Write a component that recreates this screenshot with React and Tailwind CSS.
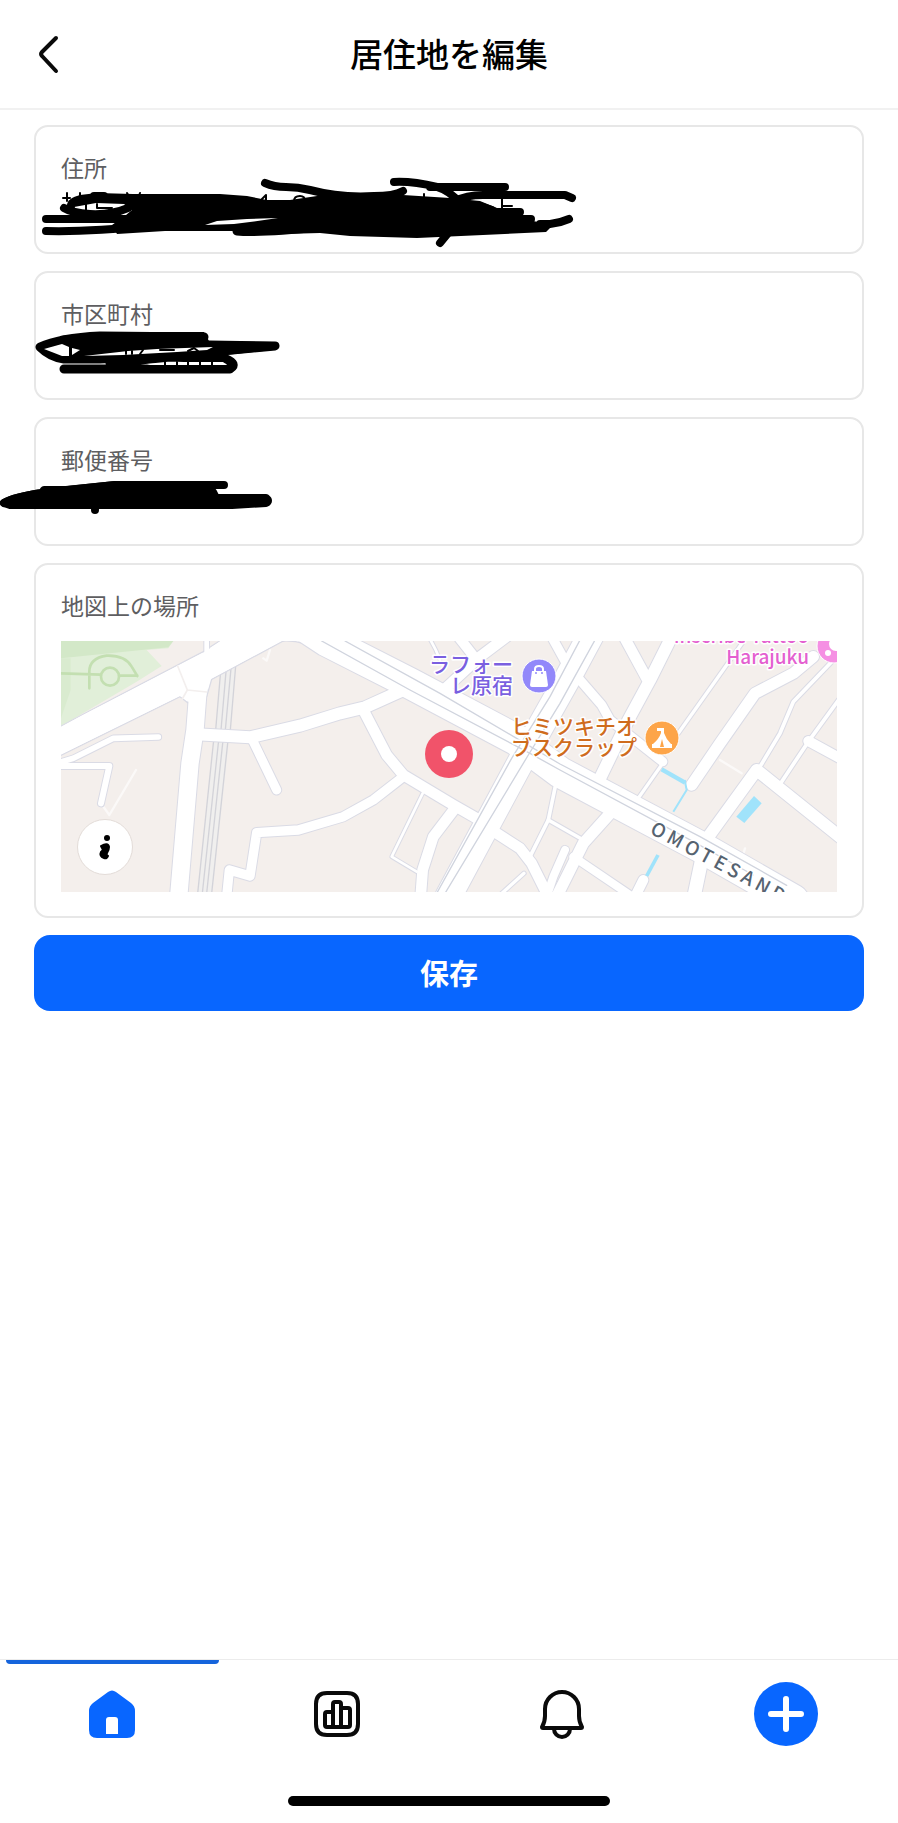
import React, { useState } from 'react';

const ROAD_EDGE = '#dadbe5';

// [path, width] in map tile units
const ROADS = [
    ['M20 400 L70 385 L190 325 L325 321', 17],
    ['M20 408 H178 L153 520', 18],
    ['M470 20 V80', 14],
    ['M445 170 L435 300 L420 400 L386 800', 52],
    ['M440 313 L600 322 L750 287 L870 250 L945 232 L1060 180', 36],
    ['M605 325 L680 480', 27],
    ['M530 800 L538 720 L600 738 L620 608 L745 600 L880 560 L970 510 L1060 440', 28],
    ['M940 240 L1010 375 L1060 435 L1210 525 L1280 565', 32],
    ['M1215 535 L1150 620 L1118 720 L1112 800', 32],
    ['M1118 490 L1025 680 L1100 725', 8],
    ['M1170 190 L1290 80 L1370 20', 32],
    ['M1225 20 L1280 90', 30],
    ['M1135 20 Q1155 50 1170 90', 8],
    ['M1505 20 L1560 120', 28],
    ['M1310 590 L1410 655 L1445 700 L1495 800', 32],
    ['M1545 660 L1510 740 L1490 800', 24],
    ['M1522 440 L1495 570 L1440 680', 11],
    ['M1495 570 L1600 630', 11],
    ['M1422 730 L1350 795', 10],
    ['M1685 545 L1600 640 L1550 740 L1520 800', 34],
    ['M1570 680 L1740 795', 24],
    ['M1780 750 L1755 800', 30],
    ['M1955 690 L1932 800', 40],
    ['M1590 150 L1655 225 L1680 270 L1838 395', 28],
    ['M1865 20 L1800 150 L1735 270 L1650 445', 36],
    ['M1722 20 L1790 145', 32],
    ['M1838 400 L1768 500', 10],
    ['M2090 20 L1885 310', 10],
    ['M2290 80 L2230 130 L2115 190 L2010 340 L1925 465', 34],
    ['M2350 90 L2230 215 L2190 310 L2130 410', 11],
    ['M2400 645 L2120 420 L1975 620', 36],
    ['M2380 190 L2275 335 L2195 455', 11],
    ['M2275 333 L2380 390', 30],
    ['M1195 800 L1415 390 L1550 150 L1625 10', 78],
    ['M780 0 L830 33 L1080 160 L1400 330 L1530 427 L1950 650 L2230 810', 92],
];

const RAILS = [
    'M511 135 L497 300 L490 340 L443 790',
    'M528 125 L513 300 L505 340 L457 790',
    'M543 115 L526 300 L518 340 L470 790',
    'M557 108 L541 300 L533 340 L485 790',
];

const LANES = [
    'M815 33 L1080 180 L1440 370 L1530 420 L1930 635 L2110 735',
    'M885 33 L1170 190 L1400 325 L1530 402 L1950 620 L2210 766',
    'M1160 790 L1385 385 L1500 200 L1590 30',
    'M1185 790 L1435 375 L1530 220 L1635 30',
];

const Roads = () => (
    <g transform="translate(-11 -11) scale(0.33333)" fill="none" strokeLinejoin="round" strokeLinecap="round">
        {/* Park */}
        <path d="M33 33 H370 L355 55 L290 60 L335 108 L260 155 L95 252 L33 290 Z" fill="#e1efd9" />
        <path d="M33 33 H370 L355 52 L33 85 Z" fill="#d3e8c8" />
        <path d="M33 85 H62 V180 L33 265 Z" fill="#d9ebcf" />
        <g stroke="#c3dfb1" strokeWidth="8">
            <circle cx="180" cy="140" r="27" />
            <path d="M33 130 L152 134 M208 137 H262 M118 175 V130 Q115 85 170 77 Q225 75 245 110 L262 138" />
        </g>

        {/* Railway */}
        <path d="M534 115 L519 300 L464 790" stroke="#f0efee" strokeWidth="44" />
        {RAILS.map((d) => <path key={d} d={d} stroke="#d3d3d9" strokeWidth="4" />)}

        {/* Faint footpaths */}
        <path d="M160 530 L178 555 L258 420 M640 85 L650 92 L660 60 M2010 390 L2075 430 M2085 655 L2075 690" stroke="#fbf9f8" strokeWidth="7" />

        {/* Street casing, then street surface */}
        <path d="M20 296 L95 255 L460 65 L485 48 L530 20 H720 L700 33 L485 148 L470 200 L415 220 L390 200 L20 382 Z" fill="#ffffff" stroke={ROAD_EDGE} strokeWidth="4" />
        <path d="M700 33 Q760 30 830 70 L1040 180 L1100 150 L850 20 H700 Z" fill="#ffffff" stroke={ROAD_EDGE} strokeWidth="4" />
        {ROADS.map(([d, w]) => <path key={d} d={d} stroke={ROAD_EDGE} strokeWidth={w + 6} />)}
        <path d="M20 297 L95 257 L462 67 L487 50 L530 20 H716 L698 31 L481 148 L468 200 L417 216 L390 198 L20 380 Z" fill="#ffffff" />
        <path d="M702 30 Q760 28 832 67 L1040 176 L1100 150 L850 20 H700 Z" fill="#ffffff" />
        {ROADS.map(([d, w]) => <path key={d} d={d} stroke="#ffffff" strokeWidth={w} />)}
        <path d="M383 108 L412 180 L470 186 M412 180 L395 210" stroke="#f3efee" strokeWidth="5" />
        {LANES.map((d) => <path key={d} d={d} stroke="#d0d4de" strokeWidth="4" />)}

        {/* Water */}
        <g stroke="#a0e3fb" strokeLinecap="butt">
            <path d="M1835 418 L1905 458" strokeWidth="13" />
            <path d="M1904 450 L1910 480 L1870 545" strokeWidth="6" />
            <path d="M1824 675 L1790 738" strokeWidth="11" />
        </g>
        <path d="M2112 498 L2135 520 L2083 579 L2059 560 Z" fill="#a0e3fb" />
    </g>
);

const LocationMap = () => (
    <div className="relative h-[251px] overflow-hidden bg-[#f4efec]">
        <svg
            viewBox="0 0 776 251"
            preserveAspectRatio="xMidYMid slice"
            className="block h-full w-full"
            role="img"
            aria-label="地図"
        >
            <Roads />

            {/* Shopping */}
            <circle cx="478" cy="35" r="17" fill="#9288fa" stroke="#ffffff" strokeWidth="1" />
            <path d="M471 30 H485 L487 44 Q487 46 485 46 H471 Q469 46 469 44 Z" fill="#ffffff" />
            <path d="M474 31 V28 Q474 25 478 25 Q482 25 482 28 V31" fill="none" stroke="#ffffff" strokeWidth="2" />
            <circle cx="475" cy="32" r="1" fill="#9288fa" />
            <circle cx="481" cy="32" r="1" fill="#9288fa" />

            {/* Camp */}
            <circle cx="601" cy="97" r="17" fill="#fda549" stroke="#ffffff" strokeWidth="1" />
            <path d="M592 103 Q598 98 600 92 V90 H596 V87 H603 V92 Q605 98 610 103 H611 V107 H591 V103 Z" fill="#ffffff" />
            <path d="M601 98 L603 106 H599 Z" fill="#fda549" />

            {/* Tattoo studio */}
            <circle cx="773" cy="5" r="17" fill="#f590e3" stroke="#ffffff" strokeWidth="1" />
            <circle cx="775" cy="3" r="7" fill="#ffffff" />
            <circle cx="767" cy="12" r="3" fill="#ffffff" />

            <g
                className="[font-family:'Noto_Sans_CJK_JP',sans-serif] text-[21px] font-medium [paint-order:stroke]"
                stroke="#ffffff"
                strokeWidth="3"
                strokeLinejoin="round"
                textAnchor="end"
            >
                <text x="452" y="31" fill="#7a5fe0">ラフォー</text>
                <text x="452" y="52" fill="#7a5fe0">レ原宿</text>
                <text x="576" y="93" fill="#cf6c1d">ヒミツキチオ</text>
                <text x="576" y="114" fill="#cf6c1d">ブスクラップ</text>
            </g>
            <g
                className="[font-family:'Noto_Sans_CJK_JP',sans-serif] text-[19px] font-medium [paint-order:stroke]"
                stroke="#ffffff"
                strokeWidth="3"
                strokeLinejoin="round"
                textAnchor="end"
                fill="#e45fd0"
            >
                <text x="748" y="2">Inscribe Tattoo</text>
                <text x="748" y="23">Harajuku</text>
            </g>
            <text
                transform="translate(588 192) rotate(28)"
                className="[font-family:'Noto_Sans_CJK_JP',sans-serif] text-[19px] font-medium tracking-[4px] [paint-order:stroke]"
                fill="#566370"
                stroke="#ffffff"
                strokeWidth="3"
            >
                OMOTESANDO
            </text>

            {/* Selected place */}
            <circle cx="388" cy="113" r="24" fill="#f1536a" />
            <circle cx="388" cy="113" r="8" fill="#ffffff" />
        </svg>

        <button
            type="button"
            aria-label="地図の情報"
            className="absolute bottom-[17px] left-4 flex size-14 items-center justify-center rounded-full border border-[#e3dcd8] bg-white"
        >
            <svg viewBox="0 0 14 26" className="h-[26px] w-[14px]">
                <circle cx="9" cy="4" r="3" fill="#000000" />
                <path d="M3 12 Q10 8 11 13 Q11 16 9 19 Q8 21 10 22 Q9 25 6 24 Q1 22 3 18 Q6 15 4 14 Z" fill="#000000" stroke="#000000" strokeWidth="2" strokeLinejoin="round" />
            </svg>
        </button>
    </div>
);

/* Pen marks hiding the private values. Drawn from the page edge, y from the card top. */
const AddressMarks = () => (
    <g fill="none" stroke="#000000" strokeWidth="8" strokeLinecap="round" strokeLinejoin="round">
        <path d="M63 73 H70 M67 68 V76 M80 68 V76 M127 68 L130 73 M140 68 L138 73 M262 74 L266 70 V76 M294 76 Q294 71 300 71 Q305 71 305 76 M424 69 V76 M502 74 V87 M502 81 H512" strokeWidth="2" />
        <path d="M68 76 L80 70 L97 68 L133 69 H220 L247 71 L267 75 H290 L317 71 L358 68 L403 70 L450 73 L480 76 L497 83 L521 90 L533 96 L553 100 L546 107 L483 110 L417 113 L350 111 L320 108 L283 109 L250 110 L236 106 H165 L117 109 L112 100 L126 90 L132 85 L124 79 L96 78 L74 82 Z" fill="#000000" stroke="none" />
        <path d="M64 83 Q72 88 90 89 Q112 90 128 83" />
        <path d="M71 84 Q69 76 82 74 H130 M94 71 H104" />
        <path d="M46 94 H130" />
        <path d="M46 106 Q90 107 150 101" />
        <path d="M237 106 Q260 108 320 102" strokeWidth="9" />
        <path d="M265 58 Q274 62 286 62 Q298 62 310 65 Q340 73 374 71 Q394 71 403 66" />
        <path d="M394 57 Q412 56 437 62 Q450 66 460 78 M430 62 H505 M456 76 Q466 70 483 70 H565 L572 73" />
        <path d="M480 81 L492 85 M495 87 H520 M510 94 H531 M540 99 L550 99 Q560 98 569 94" />
        <path d="M440 118 L449 107" />
        <path d="M217 96 L247 94 L278 93 L250 97 L234 99 L205 100 Z" fill="#ffffff" stroke="none" />
        <path d="M86 86 V79 M97 79 V83 H112" strokeWidth="2" />
    </g>
);

const CityMarks = () => (
    <g fill="none" stroke="#000000" strokeWidth="9" strokeLinecap="round" strokeLinejoin="round">
        <path d="M60 65 L100 61 H204 L209 70 L273 71 L273 79 L225 84 L170 90 L64 90 Z" fill="#000000" stroke="none" />
        <path d="M204 66 L100 65 Q60 67 40 76 Q50 86 64 88 L100 88 L180 84 L275 75 L209 74" />
        <path d="M64 98 H230 Q238 93 226 88 L170 86 L110 92" />
        <path d="M44 78 L62 73 L69 76 V85 H62 Z" fill="#ffffff" stroke="none" />
        <path d="M72 77 L80 79 L72 84 Z" fill="#ffffff" stroke="none" />
        <path d="M84 85 L128 80 L157 78 L213 76 L207 79 L177 81 L123 84 Z" fill="#ffffff" stroke="none" />
        <path d="M147 93 L187 91 L223 91 L227 94 H150 Z" fill="#ffffff" stroke="none" />
        <path d="M126 80 V83 M132 80 V83 M143 79 L140 83 M160 79 H174 M188 80 L194 77 L198 80 M165 91 V95 M177 91 V95 M188 91 V95 M200 91 V95 M212 91 V95" strokeWidth="2" />
    </g>
);

const PostalMarks = () => (
    <g fill="none" stroke="#000000" strokeWidth="8" strokeLinecap="round" strokeLinejoin="round">
        <path d="M4 86 Q14 80 42 76 L44 73 L66 73 L115 68 H224" />
        <path d="M4 86 Q14 80 42 76 L68 73 L115 68 H200 L213 75 L216 81 H266 Q270 84 266 86 L232 88 H10 Z" fill="#000000" />
        <circle cx="95" cy="93" r="4" fill="#000000" stroke="none" />
    </g>
);

const FIELDS = [
    { id: 'address', label: '住所', Marks: AddressMarks },
    { id: 'city', label: '市区町村', Marks: CityMarks },
    { id: 'postal', label: '郵便番号', Marks: PostalMarks },
];

const Field = ({ id, label, value, onChange, Marks }) => (
    <div className="relative rounded-[14px] border-2 border-[#e7e7e7] px-[25px] py-6">
        <label htmlFor={id} className="block text-[23px] leading-8 text-[#5e5e61]">{label}</label>
        <input
            id={id}
            type="text"
            value={value}
            onChange={(e) => onChange(id, e.target.value)}
            className="block h-[45px] w-full bg-transparent text-[23px] text-black outline-none"
        />
        <svg viewBox="0 0 600 129" className="pointer-events-none absolute -top-0.5 -left-9 h-[129px] w-[600px]" aria-hidden="true">
            <Marks />
        </svg>
    </div>
);

const HomeIcon = () => (
    <svg viewBox="0 0 48 48" className="size-12">
        <path d="M20 2 Q24 -1 28 2 L43 13 Q47 16 47 21 V40 Q47 48 39 48 H9 Q1 48 1 40 V21 Q1 16 5 13 Z" fill="#0866ff" />
        <path d="M18 44 V30 Q18 27 21 27 H27 Q30 27 30 30 V44 Z" fill="#ffffff" />
    </svg>
);

const ChartIcon = () => (
    <svg viewBox="0 0 48 48" className="size-12" fill="none" stroke="#0a0a0a" strokeWidth="4" strokeLinejoin="round">
        <path d="M3 14 Q3 3 14 3 H34 Q45 3 45 14 V34 Q45 45 34 45 H14 Q3 45 3 34 Z" />
        <path d="M20 37 V14 Q20 12 22 12 H26 Q28 12 28 14 V37" />
        <path d="M20 22 H14 Q12 22 12 24 V35 Q12 37 14 37 H35 Q37 37 37 35 V20 Q37 18 35 18 H28" />
    </svg>
);

const BellIcon = () => (
    <svg viewBox="0 0 48 48" className="size-12 overflow-visible" fill="none" stroke="#0a0a0a" strokeWidth="4" strokeLinejoin="round" strokeLinecap="round">
        <path d="M8 19 A17 17 0 0 1 42 19 V26 Q42 32 45 37 Q45 38 44 38 H6 Q5 38 5 37 Q8 32 8 26 Z" />
        <path d="M17 39 A8 8 0 0 0 33 39" />
    </svg>
);

const AddIcon = () => (
    <svg viewBox="0 0 64 64" className="size-16">
        <circle cx="32" cy="32" r="32" fill="#0866ff" />
        <path d="M32 17 V47 M17 32 H47" stroke="#ffffff" strokeWidth="6" strokeLinecap="round" />
    </svg>
);

const TABS = [
    { id: 'home', label: 'ホーム', Icon: HomeIcon },
    { id: 'insights', label: 'インサイト', Icon: ChartIcon },
    { id: 'notifications', label: 'お知らせ', Icon: BellIcon },
    { id: 'create', label: '作成', Icon: AddIcon },
];

const App = () => {
    const [form, setForm] = useState({ address: '', city: '', postal: '' });
    const [tab, setTab] = useState('home');

    const updateField = (id, value) => setForm((prev) => ({ ...prev, [id]: value }));

    return (
        <div lang="ja" className="flex min-h-screen flex-col overflow-x-hidden bg-white [font-family:'Noto_Sans_CJK_JP',sans-serif]">
            {/* Header */}
            <header className="grid h-[110px] grid-cols-[64px_1fr_64px] items-center border-b-2 border-[#f1f1f1] px-4">
                <button type="button" aria-label="戻る" className="flex size-16 items-center justify-center">
                    <svg viewBox="0 0 24 40" className="h-10 w-6" fill="none" stroke="#0a0a0a" strokeWidth="4" strokeLinecap="round" strokeLinejoin="round">
                        <path d="M20 4 L6 18 Q4 20 6 22 L20 37" />
                    </svg>
                </button>
                <h1 className="pb-0.5 text-center text-[33px] leading-[48px] font-medium text-black">居住地を編集</h1>
            </header>

            {/* Form */}
            <main className="flex-1">
                <form className="flex flex-col gap-[17px] px-[34px] pt-[15px] pb-8" onSubmit={(e) => e.preventDefault()}>
                    {FIELDS.map((field) => (
                        <Field key={field.id} {...field} value={form[field.id]} onChange={updateField} />
                    ))}
                    <section className="rounded-[14px] border-2 border-[#e7e7e7] px-[25px] py-6" aria-labelledby="map-title">
                        <h2 id="map-title" className="mb-5 text-[23px] leading-8 text-[#5e5e61]">地図上の場所</h2>
                        <LocationMap />
                    </section>
                    <button type="submit" className="h-[76px] rounded-2xl bg-[#0866ff] text-[29px] font-bold text-white">
                        保存
                    </button>
                </form>
            </main>

            {/* Tab bar */}
            <nav className="border-t border-[#ececec]">
                <div className="grid grid-cols-4">
                    {TABS.map(({ id, label, Icon }) => (
                        <button
                            key={id}
                            type="button"
                            aria-label={label}
                            onClick={() => setTab(id)}
                            className="relative flex h-[108px] items-center justify-center"
                        >
                            {tab === id && <span className="absolute inset-x-1.5 top-0 h-1 rounded-b bg-[#1564dc]" />}
                            <Icon />
                        </button>
                    ))}
                </div>
                <div className="mx-auto mt-7 mb-[17px] h-2.5 w-[322px] rounded-full bg-black" />
            </nav>
        </div>
    );
};

export default App;
